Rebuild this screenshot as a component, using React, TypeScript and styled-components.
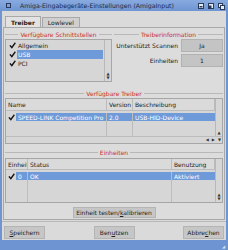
import React from 'react'
import styled, { createGlobalStyle } from 'styled-components'

const Global = createGlobalStyle`
  html, body { margin: 0; padding: 0; }
  body {
    width: 228px;
    height: 250px;
    overflow: hidden;
    font-family: 'DejaVu Sans', sans-serif;
    font-size: 6px;
    color: #222;
  }
`

const Window = styled.div`
  width: 228px;
  height: 250px;
  box-sizing: border-box;
  background: #6e95d2;
  padding: 0 2px;
  display: flex;
  flex-direction: column;
`

const TitleBar = styled.div`
  height: 11px;
  flex: none;
  display: flex;
  align-items: center;
  color: #1d2a44;
  font-size: 6.2px;
  background: linear-gradient(#88aae0, #6e95d2);
  margin: 0 -2px;
  padding: 0 3px;
`

const CloseBox = styled.div`
  width: 3px;
  height: 3px;
  border: 1px solid #2a3a5a;
  margin: 0 9px 0 3px;
`

const TitleText = styled.span`
  flex: 1;
`

const Gadget = styled.div`
  width: 6px;
  height: 6px;
  margin-left: 4px;
`

const Body = styled.div`
  flex: 1;
  background: #dadada;
  display: flex;
  flex-direction: column;
  padding: 5px 1px 0;
`

const TabRow = styled.div`
  display: flex;
  height: 11px;
  padding-left: 2px;
`

const Tab = styled.div<{ active?: boolean }>`
  height: ${({ active }) => (active ? '11px' : '10px')};
  margin-top: ${({ active }) => (active ? '0' : '1px')};
  box-sizing: border-box;
  padding: 0 5px;
  display: flex;
  align-items: center;
  border: 1px solid #a8a8a8;
  border-bottom: none;
  background: ${({ active }) => (active ? '#e2e2e2' : '#cfcfcf')};
  font-weight: ${({ active }) => (active ? 'bold' : 'normal')};
  margin-right: 1px;
  position: relative;
  z-index: 1;
  margin-bottom: -1px;
`

const Panel = styled.div`
  border: 1px solid #a8a8a8;
  background: #dcdcdc;
  box-sizing: border-box;
  padding: 2px 1px 1px;
  display: flex;
  flex-direction: column;
`

const TopRow = styled.div`
  display: flex;
  gap: 2px;
`

const Group = styled.div<{ w?: number }>`
  ${({ w }) => (w ? `width: ${w}px;` : 'flex: 1;')}
  display: flex;
  flex-direction: column;
`

const GroupLabel = styled.div<{ mt?: number }>`
  display: flex;
  align-items: center;
  gap: 2px;
  color: #c8302e;
  height: 8px;
  white-space: nowrap;
  margin-top: ${({ mt }) => mt ?? 0}px;
  &::before, &::after {
    content: '';
    flex: 1;
    height: 1px;
    background: #b8b8b8;
  }
`

const ListBox = styled.div<{ h: number }>`
  height: ${({ h }) => h}px;
  box-sizing: border-box;
  border: 1px solid #a6a6a6;
  background: #d6d6d6;
  display: flex;
  margin-top: 1px;
`

const ListArea = styled.div`
  flex: 1;
  padding: 1px;
  display: flex;
  flex-direction: column;
`

const Row = styled.div`
  height: 9px;
  display: flex;
  align-items: stretch;
`

const RowText = styled.div<{ selected?: boolean }>`
  flex: 1;
  display: flex;
  align-items: center;
  padding-left: 1px;
  background: ${({ selected }) => (selected ? '#6f9ad9' : 'transparent')};
  color: ${({ selected }) => (selected ? '#fff' : '#222')};
`

const CheckBox = styled.span`
  width: 10px;
  flex: none;
  display: flex;
  align-items: center;
  justify-content: center;
`

const VScroll = styled.div`
  width: 6px;
  border-left: 1px solid #b8b8b8;
  display: flex;
  flex-direction: column;
  justify-content: flex-end;
  align-items: center;
  padding-bottom: 1px;
`

const Arrow = styled.span`
  font-size: 4px;
  line-height: 4px;
  color: #333;
`

const InfoGrid = styled.div`
  display: grid;
  grid-template-columns: 1fr 42px;
  column-gap: 3px;
  row-gap: 2px;
  align-items: center;
  margin-top: 1px;
`

const InfoLabel = styled.div`
  text-align: right;
  white-space: nowrap;
`

const InfoValue = styled.div`
  height: 13px;
  background: #c4c4c4;
  border: 1px solid #b2b2b2;
  box-sizing: border-box;
  display: flex;
  align-items: center;
  justify-content: center;
`

const Table = styled.div<{ h: number; mt: number }>`
  height: ${({ h }) => h}px;
  margin-top: ${({ mt }) => mt}px;
  box-sizing: border-box;
  border: 1px solid #a6a6a6;
  background: #d6d6d6;
  display: flex;
  flex-direction: column;
`

const TableMain = styled.div`
  flex: 1;
  display: flex;
`

const TableBody = styled.div`
  flex: 1;
  display: flex;
  flex-direction: column;
`

const Header = styled.div<{ cols: string; h: number }>`
  display: grid;
  grid-template-columns: ${({ cols }) => cols};
  height: ${({ h }) => h}px;
  background: #dadada;
  border-bottom: 1px solid #bcbcbc;
`

const HeaderCell = styled.div`
  padding-left: 2px;
  border-right: 1px solid #bcbcbc;
  display: flex;
  align-items: center;
  overflow: hidden;
  white-space: nowrap;
`

const Rows = styled.div<{ cols: string }>`
  flex: 1;
  display: grid;
  grid-template-columns: ${({ cols }) => cols};
  grid-template-rows: 8px 1fr;
  padding-top: 2px;
`

const Cell = styled.div<{ last?: boolean }>`
  display: flex;
  align-items: stretch;
  white-space: nowrap;
  overflow: hidden;
  border-right: ${({ last }) => (last ? 'none' : '1px solid #bcbcbc')};
`

const CellText = styled.div`
  flex: 1;
  display: flex;
  align-items: center;
  padding-left: 2px;
  background: #6f9ad9;
  color: #fff;
`

const FillCell = styled.div<{ last?: boolean }>`
  border-right: ${({ last }) => (last ? 'none' : '1px solid #bcbcbc')};
`

const HScroll = styled.div`
  height: 6px;
  border-top: 1px solid #bcbcbc;
  display: flex;
  justify-content: flex-end;
  align-items: center;
  gap: 3px;
  padding-right: 1px;
`

const Center = styled.div`
  display: flex;
  justify-content: center;
  margin-top: 4px;
`

const Button = styled.div<{ w: number; h: number }>`
  width: ${({ w }) => w}px;
  height: ${({ h }) => h}px;
  box-sizing: border-box;
  background: #c6c6c6;
  border: 1px solid #b4b4b4;
  display: flex;
  align-items: center;
  justify-content: center;
  white-space: nowrap;
  color: #222;
`

const Separator = styled.div`
  height: 1px;
  background: #b8b8b8;
  margin: 1px -1px 0;
`

const ButtonRow = styled.div`
  display: flex;
  justify-content: space-between;
  margin-top: 4px;
  padding: 0 1px;
`

const BottomBar = styled.div`
  height: 9px;
  flex: none;
  margin: 0 -2px;
  background: #6e95d2;
  display: flex;
  justify-content: flex-end;
  align-items: flex-end;
  padding: 0 3px 1px 0;
`

const U = styled.span`
  text-decoration: underline;
`

const Tick = () => (
  <svg width="7" height="7" viewBox="0 0 8 8">
    <path d="M0.4 4.4 L1.9 3.3 L3.1 5.0 L6.7 0.4 L7.8 1.3 L3.3 7.6 Z" fill="#111" />
  </svg>
)

const Iconify = () => (
  <svg width="6" height="6" viewBox="0 0 6 6">
    <rect x="0.5" y="0.5" width="5" height="5" fill="#e8edf5" stroke="#2a3a5a" />
    <rect x="1.5" y="3" width="3" height="1.5" fill="#2a3a5a" />
  </svg>
)

const Zoom = () => (
  <svg width="6" height="6" viewBox="0 0 6 6">
    <rect x="0.5" y="0.5" width="5" height="5" fill="#e8edf5" stroke="#2a3a5a" />
    <rect x="0.5" y="2.5" width="3" height="3" fill="#2a3a5a" />
  </svg>
)

const Depth = () => (
  <svg width="7" height="7" viewBox="0 0 7 7">
    <rect x="0.5" y="0.5" width="4" height="4" fill="#e8edf5" stroke="#2a3a5a" />
    <rect x="2.5" y="2.5" width="4" height="4" fill="#e8edf5" stroke="#2a3a5a" />
  </svg>
)

const COLS_TREIBER = '101px 26px 1fr'
const COLS_UNITS = '22px 144px 1fr'

export default function App() {
  return (
    <>
      <Global />
      <Window>
        <TitleBar>
          <CloseBox />
          <TitleText>Amiga-Eingabegeräte-Einstellungen (AmigaInput)</TitleText>
          <Gadget><Iconify /></Gadget>
          <Gadget><Zoom /></Gadget>
          <Gadget style={{ marginRight: 1 }}><Depth /></Gadget>
        </TitleBar>
        <Body>
          <TabRow>
            <Tab active>Treiber</Tab>
            <Tab>Lowlevel</Tab>
          </TabRow>
          <Panel>
            <TopRow>
              <Group w={107}>
                <GroupLabel>Verfügbare Schnittstellen</GroupLabel>
                <ListBox h={43}>
                  <ListArea>
                    <Row><CheckBox><Tick /></CheckBox><RowText>Allgemein</RowText></Row>
                    <Row><CheckBox><Tick /></CheckBox><RowText selected>USB</RowText></Row>
                    <Row><CheckBox><Tick /></CheckBox><RowText>PCI</RowText></Row>
                  </ListArea>
                  <VScroll>
                    <Arrow>▲</Arrow>
                    <Arrow>▼</Arrow>
                  </VScroll>
                </ListBox>
              </Group>
              <Group>
                <GroupLabel>Treiberinformation</GroupLabel>
                <InfoGrid>
                  <InfoLabel>Unterstützt Scannen</InfoLabel>
                  <InfoValue>Ja</InfoValue>
                  <InfoLabel>Einheiten</InfoLabel>
                  <InfoValue>1</InfoValue>
                </InfoGrid>
              </Group>
            </TopRow>

            <GroupLabel mt={7}>Verfügbare Treiber</GroupLabel>
            <Table h={46} mt={1}>
              <TableMain>
                <TableBody>
                  <Header cols={COLS_TREIBER} h={11}>
                    <HeaderCell>Name</HeaderCell>
                    <HeaderCell>Version</HeaderCell>
                    <HeaderCell>Beschreibung</HeaderCell>
                  </Header>
                  <Rows cols={COLS_TREIBER}>
                    <Cell>
                      <CheckBox><Tick /></CheckBox>
                      <CellText>SPEED-LINK Competition Pro</CellText>
                    </Cell>
                    <Cell><CellText>2.0</CellText></Cell>
                    <Cell last><CellText>USB-HID-Device</CellText></Cell>
                    <FillCell />
                    <FillCell />
                    <FillCell last />
                  </Rows>
                </TableBody>
                <VScroll>
                  <Arrow>▲</Arrow>
                </VScroll>
              </TableMain>
              <HScroll>
                <Arrow>◀</Arrow>
                <Arrow>▶</Arrow>
                <Arrow>▼</Arrow>
              </HScroll>
            </Table>

            <GroupLabel mt={4}>Einheiten</GroupLabel>
            <Table h={45} mt={2}>
              <TableMain>
                <TableBody>
                  <Header cols={COLS_UNITS} h={10}>
                    <HeaderCell>Einheit</HeaderCell>
                    <HeaderCell>Status</HeaderCell>
                    <HeaderCell>Benutzung</HeaderCell>
                  </Header>
                  <Rows cols={COLS_UNITS}>
                    <Cell>
                      <CheckBox><Tick /></CheckBox>
                      <CellText>0</CellText>
                    </Cell>
                    <Cell><CellText>OK</CellText></Cell>
                    <Cell last><CellText>Aktiviert</CellText></Cell>
                    <FillCell />
                    <FillCell />
                    <FillCell last />
                  </Rows>
                </TableBody>
                <VScroll>
                  <Arrow>▲</Arrow>
                  <Arrow>▼</Arrow>
                </VScroll>
              </TableMain>
            </Table>

            <Center>
              <Button w={83} h={11}>Einheit testen/<U>k</U>alibrieren</Button>
            </Center>
          </Panel>
          <Separator />
          <ButtonRow>
            <Button w={41} h={13}><U>S</U>peichern</Button>
            <Button w={41} h={13}>Ben<U>u</U>tzen</Button>
            <Button w={41} h={13}>Abbre<U>c</U>hen</Button>
          </ButtonRow>
        </Body>
        <BottomBar>
          <Arrow style={{ color: '#dfe6f2' }}>◢</Arrow>
        </BottomBar>
      </Window>
    </>
  )
}
